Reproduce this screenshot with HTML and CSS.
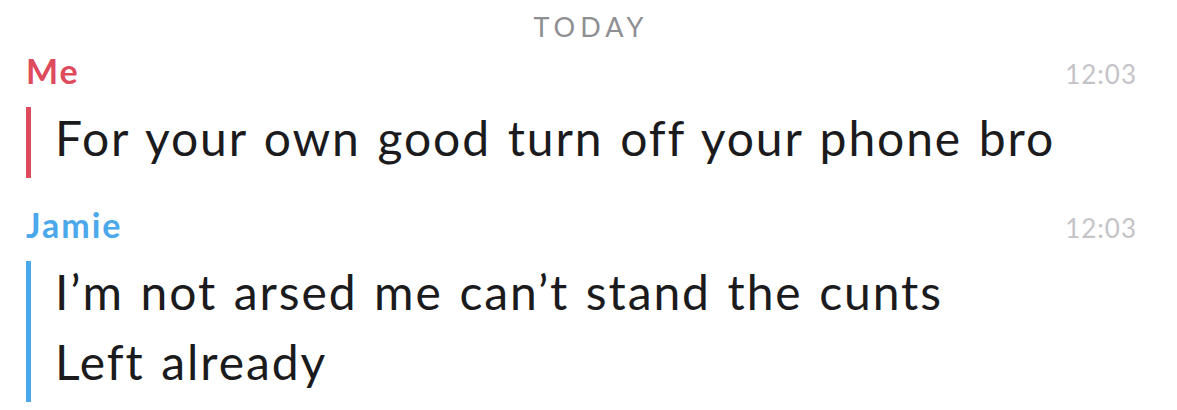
FILE: index.html
```html
<!DOCTYPE html>
<html lang="en">
<head>
  <meta charset="UTF-8">
  <meta name="viewport" content="width=device-width, initial-scale=1.0">
  <title>Chat</title>
  <link rel="stylesheet" href="styles.css">
</head>
<body>
  <div class="chat">
    <div class="day">TODAY</div>

    <div class="group me">
      <div class="head">
        <span class="name">Me</span>
        <span class="time">12:03</span>
      </div>
      <div class="bubble">
        <p class="line">For your own good turn off your phone bro</p>
      </div>
    </div>

    <div class="group them">
      <div class="head">
        <span class="name">Jamie</span>
        <span class="time">12:03</span>
      </div>
      <div class="bubble">
        <p class="line">I’m not arsed me can’t stand the cunts</p>
        <p class="line">Left already</p>
      </div>
    </div>
  </div>
</body>
</html>
```

FILE: styles.css
```css
/* chat log */
body {
  font-family: Lato, "Open Sans", sans-serif;
  margin: 0;
  padding: 0;
  background-color: #fff;
  color: #1b1b1d;
}
.chat {
  display: flex;
  flex-direction: column;
}
.day {
  text-align: center;
  font-size: 27px;
  letter-spacing: 5px;
  color: #8e8e93;
  padding: 11px 0 8px 5px;
  line-height: 32px;
}
.group {
  display: flex;
  flex-direction: column;
  padding: 0 40px 0 26px;
}
.head {
  display: flex;
  justify-content: space-between;
  align-items: baseline;
  line-height: 40px;
}
.name {
  font-size: 34px;
  font-weight: bold;
  letter-spacing: 2px;
}
.time {
  font-size: 26px;
  letter-spacing: 1px;
  color: #c4c4c8;
}
.bubble {
  border-left: 5px solid;
  padding: 0 0 5px 24px;
  margin-top: 13px;
}
.line {
  margin: 0;
  font-size: 48px;
  line-height: 70px;
  letter-spacing: 1.9px;
  word-spacing: 2.5px;
  color: #1b1b1d;
}
.line:first-child {
  margin-top: -4px;
}
.me .name,
.me .bubble {
  color: #dd4b5d;
  border-color: #dd4b5d;
}
.them {
  margin-top: 27px;
}
.them .name,
.them .bubble {
  color: #4ba8ea;
  border-color: #4ba8ea;
}
```
